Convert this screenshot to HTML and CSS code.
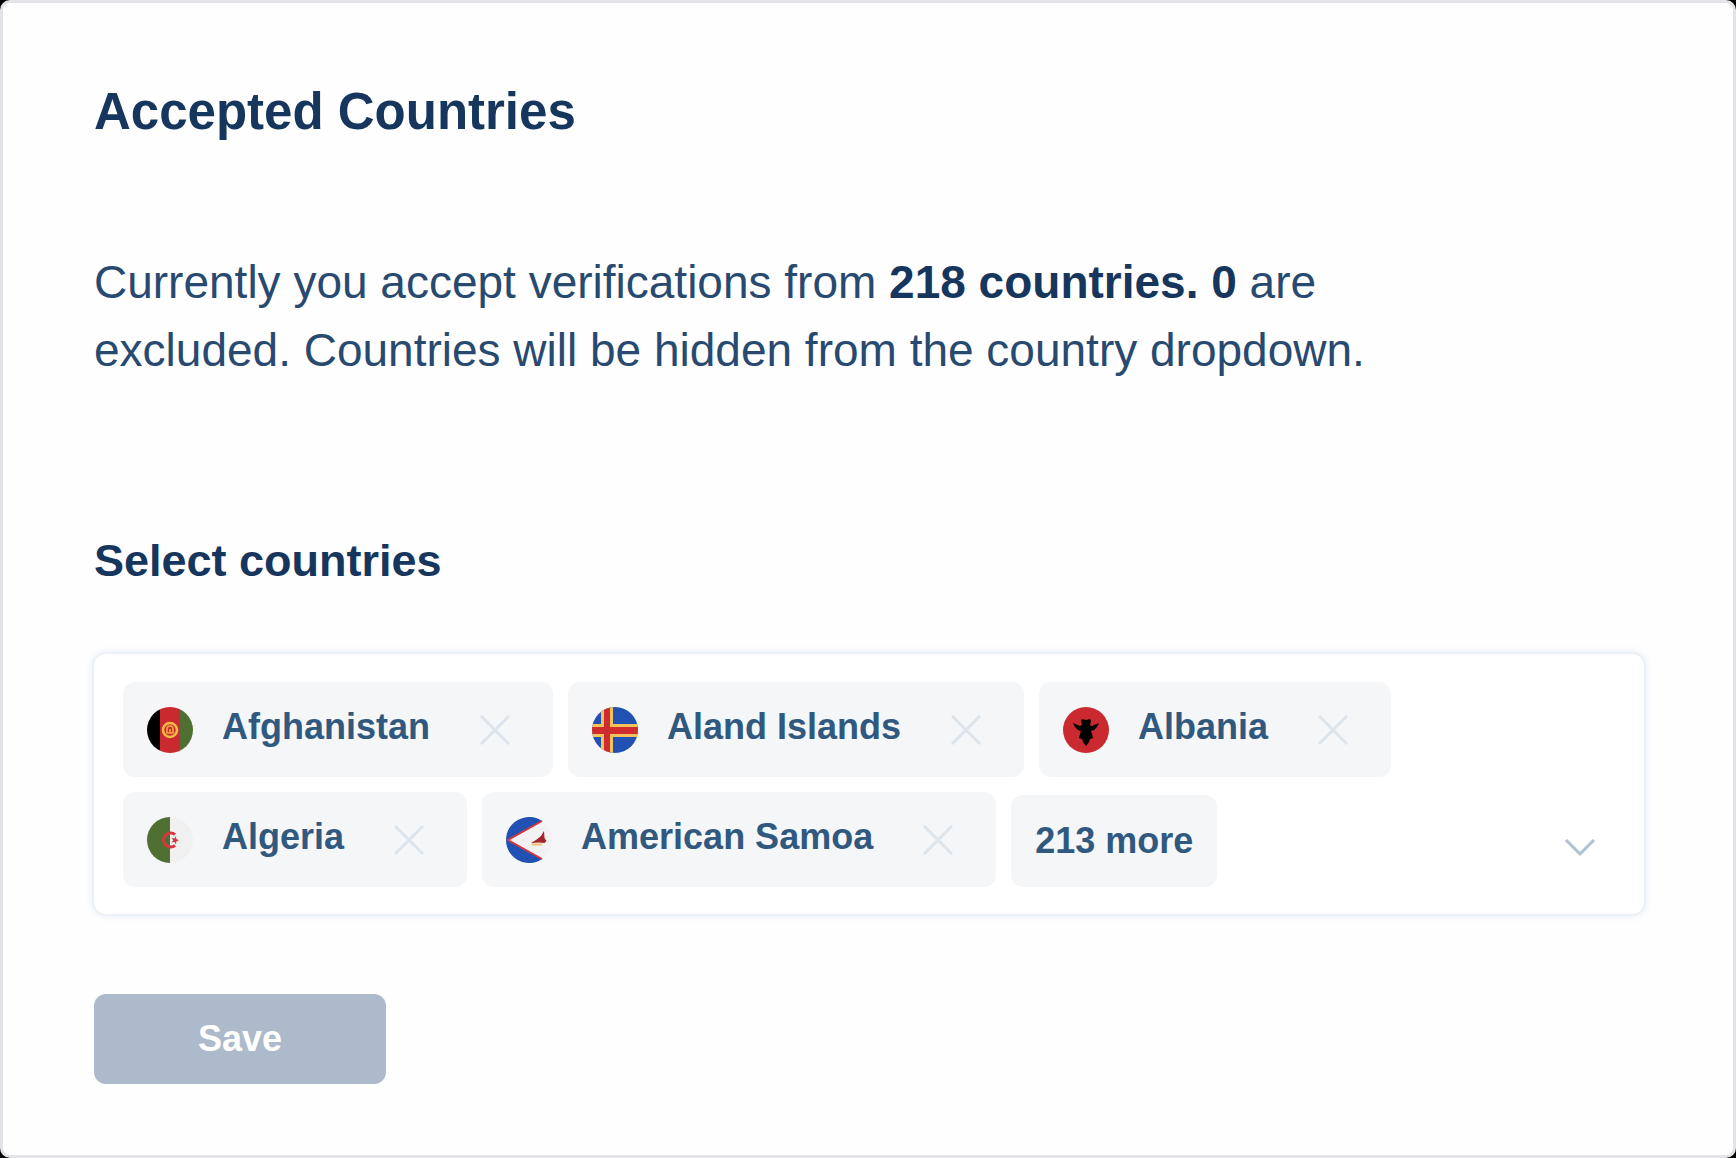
FILE: index.html
```html
<!DOCTYPE html>
<html lang="en">
<head>
<meta charset="utf-8">
<meta name="viewport" content="width=device-width, initial-scale=1">
<title>Accepted Countries</title>
<link rel="stylesheet" href="styles.css">
</head>
<body>
<main class="card">
  <h1 class="title">Accepted Countries</h1>
  <p class="summary">Currently you accept verifications from <strong>218 countries. 0</strong> are excluded. Countries will be hidden from the country dropdown.</p>
  <h2 class="subtitle" id="select-label">Select countries</h2>
  <div class="picker" role="group" aria-labelledby="select-label">
    <ul class="chips">
      <li class="chip">
        <svg class="flag" viewBox="0 0 46 46" aria-hidden="true">
          <clipPath id="round"><circle cx="23" cy="23" r="23"/></clipPath>
          <g clip-path="url(#round)">
            <path fill="#000" d="M0 0h13v46H0z"/><path fill="#c9292f" d="M13 0h20v46H13z"/><path fill="#507033" d="M33 0h13v46H33z"/>
            <circle cx="23" cy="23" r="7" fill="none" stroke="#f2b848" stroke-width="2.6"/>
            <path d="M20 26v-4a3 3 0 0 1 6 0v4zM23 22v4" fill="none" stroke="#f2a840" stroke-width="1.6"/>
          </g>
        </svg>
        <span class="name">Afghanistan</span>
        <button class="remove" type="button" aria-label="Remove Afghanistan"><svg class="cross" viewBox="0 0 30 30"><path d="M1 1l28 28M29 1L1 29"/></svg></button>
      </li>
      <li class="chip">
        <svg class="flag" viewBox="0 0 46 46" aria-hidden="true">
          <g clip-path="url(#round)">
            <path fill="#2151b3" d="M0 0h46v46H0z"/>
            <path fill="#f3c25a" d="M9 0h12v46H9zM0 17h46v13H0z"/>
            <path fill="#cf2c30" d="M12 0h6v46h-6zM0 20h46v7H0z"/>
          </g>
        </svg>
        <span class="name">Aland Islands</span>
        <button class="remove" type="button" aria-label="Remove Aland Islands"><svg class="cross" viewBox="0 0 30 30"><path d="M1 1l28 28M29 1L1 29"/></svg></button>
      </li>
      <li class="chip">
        <svg class="flag" viewBox="0 0 46 46" aria-hidden="true">
          <circle cx="23" cy="23" r="23" fill="#c9292f"/>
          <path fill="#000" d="M19 12l4 1 4-1 1 2-1 4 2 1 7-3-2 4-3 3-3 1 1 3 1 4-3 1-1 3-3 4-3-4-1-3-3-1 1-4 1-3-3-1-3-3-2-4 7 3 2-1-1-4z"/>
        </svg>
        <span class="name">Albania</span>
        <button class="remove" type="button" aria-label="Remove Albania"><svg class="cross" viewBox="0 0 30 30"><path d="M1 1l28 28M29 1L1 29"/></svg></button>
      </li>
      <li class="chip">
        <svg class="flag" viewBox="0 0 46 46" aria-hidden="true">
          <g clip-path="url(#round)">
            <path fill="#f0f0f0" d="M0 0h46v46H0z"/><path fill="#507033" d="M0 0h23v46H0z"/>
          </g>
          <path d="M28 17.500a7 7 0 1 0 0 11" fill="none" stroke="#d4383e" stroke-width="3"/>
          <path fill="#d4383e" d="M29 19l-1.500 2.500-3-.5 1.700 2.200-1.700 2.300 3-.5L29 27.500l.3-2.900 2.700-1.300-2.700-1.200z"/>
        </svg>
        <span class="name">Algeria</span>
        <button class="remove" type="button" aria-label="Remove Algeria"><svg class="cross" viewBox="0 0 30 30"><path d="M1 1l28 28M29 1L1 29"/></svg></button>
      </li>
      <li class="chip">
        <svg class="flag" viewBox="0 0 46 46" aria-hidden="true">
          <path fill="#f3f2f2" d="M36 4a23 23 0 0 1 0 38L2 23z"/>
          <path fill="#2151b3" d="M36 4A23 23 0 1 0 36 42L2 23z"/>
          <path fill="none" stroke="#d2363f" stroke-width="2" d="M36 4L2 23l34 19"/>
          <path fill="#a3262c" d="M25 26l5-3 5-4 3-5 .5 7 2 3-2 2-6-.500z"/>
          <path fill="#f0c36b" d="M25 26.500h12l-2 2h-9z"/>
        </svg>
        <span class="name">American Samoa</span>
        <button class="remove" type="button" aria-label="Remove American Samoa"><svg class="cross" viewBox="0 0 30 30"><path d="M1 1l28 28M29 1L1 29"/></svg></button>
      </li>
      <li class="chip chip-more">213 more</li>
    </ul>
    <button class="toggle" type="button" aria-label="Open country list"><svg class="chevron" viewBox="0 0 30 18"><path d="M1 1l14 14L29 1"/></svg></button>
  </div>
  <button class="save" type="button">Save</button>
</main>
</body>
</html>
```
FILE: styles.css
```css
* {
  box-sizing: border-box;
}

body {
  margin: 0;
  background: #000;
  color: #17365d;
  font-family: "Liberation Sans", Arial, sans-serif;
}

button {
  margin: 0;
  padding: 0;
  border: 0;
  background: none;
  font: inherit;
  cursor: pointer;
}

svg {
  display: block;
}

.card {
  min-height: 100vh;
  padding: 79px 89px 68px 91px;
  border: 3px solid #e3e3e8;
  border-radius: 10px;
  background: #fefefe;
}

.title {
  margin: 0;
  font-size: 51px;
  line-height: 60px;
}

.summary {
  max-width: 1300px;
  margin: 106px 0 0;
  color: #294a70;
  font-size: 46px;
  line-height: 68px;
}

.summary strong {
  color: #17365d;
}

.subtitle {
  margin: 149px 0 0;
  font-size: 45px;
  line-height: 56px;
}

.picker {
  display: flex;
  align-items: flex-end;
  margin-top: 65px;
  padding: 28px 49px 27px 29px;
  border-radius: 12px;
  background: #fff;
  box-shadow: 0 0 0 2px #ebf0f6, 0 0 10px 2px #e6eff9;
}

.chips {
  display: flex;
  flex: 1;
  flex-wrap: wrap;
  align-items: flex-end;
  gap: 15px;
  margin: 0;
  padding: 0;
  list-style: none;
}

.chip {
  display: flex;
  align-items: center;
  height: 95px;
  padding: 0 43px 0 24px;
  border-radius: 12px;
  background: #f4f6f8;
  color: #31597f;
  font-size: 36px;
  font-weight: bold;
  line-height: 42px;
}

.chip-more {
  height: 92px;
  padding: 0 24px;
}

.flag {
  width: 46px;
  height: 46px;
}

.name {
  margin: 0 50px 0 29px;
  padding-bottom: 6px;
}

.cross {
  width: 30px;
  height: 30px;
  fill: none;
  stroke: #dce4ec;
  stroke-width: 3;
}

.toggle {
  padding-bottom: 30px;
}

.chevron {
  width: 30px;
  height: 18px;
  fill: none;
  stroke: #b0c1d4;
  stroke-width: 3;
}

.save {
  width: 292px;
  height: 90px;
  margin-top: 80px;
  border-radius: 12px;
  background: #adbacc;
  color: #fff;
  font-size: 36px;
  font-weight: bold;
}
```
